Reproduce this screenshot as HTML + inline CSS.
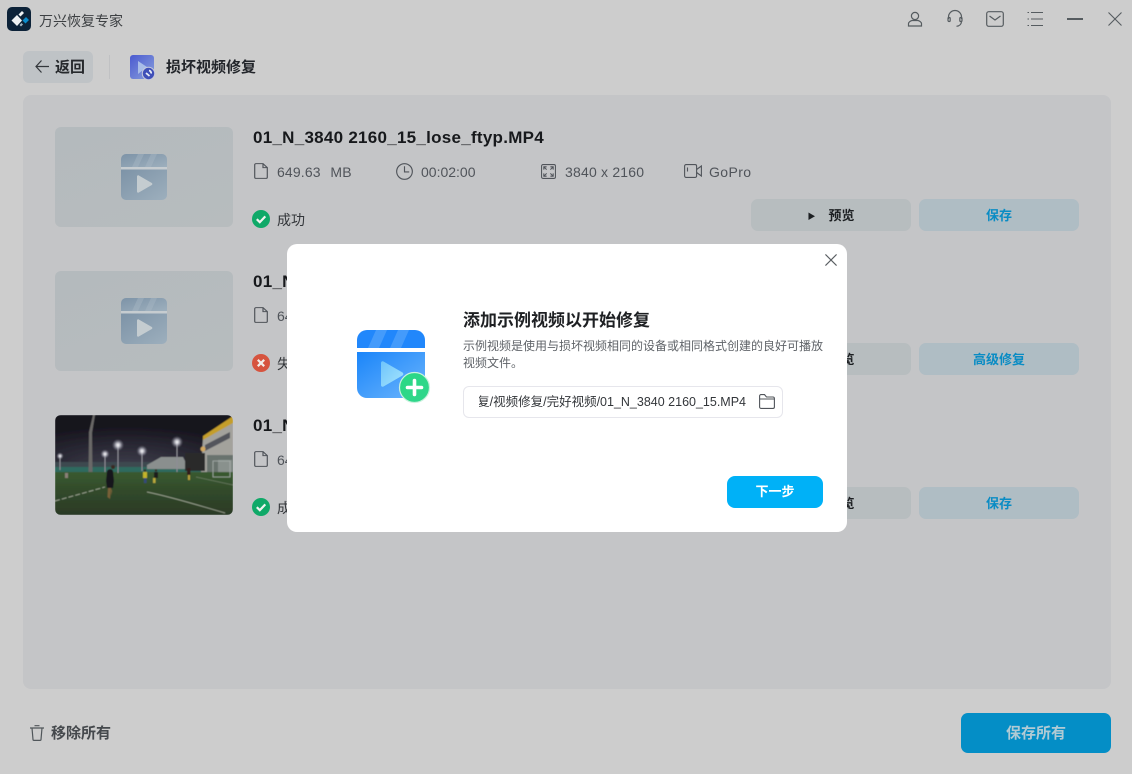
<!DOCTYPE html>
<html lang="zh-CN"><head><meta charset="utf-8"><title>万兴恢复专家</title>
<style>
*{box-sizing:border-box}
html,body{margin:0;padding:0}
body{width:1132px;height:774px;overflow:hidden;position:relative;background:#cdcdcd;font-family:"Liberation Sans","Noto Sans CJK SC",sans-serif;color:#1a1c1e}
.a{position:absolute;white-space:nowrap}
svg{position:absolute;display:block;overflow:visible}
.panel{left:23px;top:95px;width:1088px;height:594px;background:#c4c5c7;border-radius:8px}
.thumb{left:55px;width:178px;height:100px;background:linear-gradient(160deg,#b4babd,#b7bcbe);border-radius:6px}
.name{left:253px;font-size:17px;font-weight:bold;line-height:22px;color:#17191c;letter-spacing:.27px}
.meta{font-size:14px;line-height:20px;color:#50545a}
.btn{width:160px;height:32px;border-radius:7px;text-align:center;font-size:13px;font-weight:bold;line-height:33px}
.g{left:751px;background:#b7bdbf;color:#1c1f22}
.b{left:919px;background:#afbdc4;color:#0a8cc4}
.st{left:277px;font-size:14px;line-height:19px;color:#33363a}
.dlg{left:287px;top:244px;width:560px;height:288px;background:#fff;border-radius:10px}
</style></head><body>

<svg style="left:7px;top:7px" width="24" height="24" viewBox="0 0 24 24">
<rect width="24" height="24" rx="5" fill="#0c2238"/>
<path d="M4.500 13.500L10 8l5 5.500-5 5.500z" fill="#eef1f2"/>
<path d="M11.500 7.500L15 4l2 2-3.500 3.500z" fill="#eef1f2"/>
<path d="M15.500 13.500L19 10l3 3-3.500 3.500z" fill="#0a8ccc"/>
<path d="M12.500 18l2-2 1.500 1.500-2 2z" fill="#9fb2bf"/>
</svg>
<div class="a" style="left:39px;top:11px;font-size:14px;line-height:20px;color:#3d4043">万兴恢复专家</div>

<svg style="left:907px;top:11px" width="16" height="16" viewBox="0 0 16 16" fill="none" stroke="#565c60" stroke-width="1.200">
<circle cx="8" cy="5" r="3.600"/><path d="M1.500 15v-2.500c0-1.200 2-2.700 3.500-3h6c1.500.3 3.500 1.800 3.500 3V15z"/></svg>
<svg style="left:947px;top:10px" width="16" height="18" viewBox="0 0 16 18" fill="none" stroke="#565c60" stroke-width="1.200">
<path d="M1.500 9V7a6.500 6.500 0 0 1 13 0v2M14.500 11c0 3-2 5-5 5.300"/><rect x="1" y="7.500" width="2.200" height="4" rx="1"/><rect x="12.800" y="7.500" width="2.200" height="4" rx="1"/></svg>
<svg style="left:986px;top:11px" width="18" height="16" viewBox="0 0 18 16" fill="none" stroke="#565c60" stroke-width="1.200">
<rect x=".7" y=".7" width="16.600" height="14.600" rx="2"/><path d="M3.500 5l5.500 4 5.500-4"/></svg>
<svg style="left:1027px;top:11px" width="17" height="16" viewBox="0 0 17 16" fill="none" stroke="#565c60" stroke-width="1.100">
<path d="M4 1.500h12M4 8h12M4 14.500h12M.5 1.500h1.500M.5 8h1.500M.5 14.500h1.500"/></svg>
<div class="a" style="left:1067px;top:18px;width:16px;height:1.500px;background:#565c60"></div>
<svg style="left:1108px;top:12px" width="14" height="14" viewBox="0 0 14 14" fill="none" stroke="#565c60" stroke-width="1.100"><path d="M.5.500l13 13M13.500.500l-13 13"/></svg>

<div class="a" style="left:23px;top:51px;width:70px;height:32px;border-radius:6px;background:#bfc3c6"></div>
<svg style="left:35px;top:60px" width="14" height="14" viewBox="0 0 14 14" fill="none" stroke="#33373b" stroke-width="1.200"><path d="M14 6.500H1M6.500 .5L1 6.500l5.500 6"/></svg>
<div class="a" style="left:55px;top:58px;font-size:15px;font-weight:bold;line-height:20px;color:#26292c">返回</div>
<div class="a" style="left:109px;top:55px;width:1px;height:24px;background:#c0c1c3"></div>
<svg style="left:130px;top:55px" width="26" height="26" viewBox="0 0 26 26">
<defs><linearGradient id="v" x1="0" y1="0" x2="1" y2="1"><stop offset="0" stop-color="#4a5ad0"/><stop offset="1" stop-color="#8aa0dc"/></linearGradient></defs>
<rect width="24" height="24" rx="3" fill="url(#v)"/><path d="M8 6l9 6-9 7z" fill="#a9bde8"/>
<circle cx="18.500" cy="18.500" r="6.200" fill="#3f4fb8" stroke="#c8cadc" stroke-width="1"/><path d="M16 18l3.500 3M19 15.500a2.400 2.400 0 0 1 2 3" stroke="#e8ecf6" stroke-width="1.800" fill="none"/></svg>
<div class="a" style="left:166px;top:58px;font-size:15px;font-weight:bold;line-height:20px;color:#22252a">损坏视频修复</div>

<div class="a panel"></div>

<!-- rows -->
<div class="a thumb" style="top:127px"></div>
<div class="a thumb" style="top:271px"></div>
<svg style="left:121px;top:154px" width="46" height="46" viewBox="0 0 46 46"><defs><linearGradient id="c" x1="0" y1="0" x2="1" y2="1"><stop offset="0" stop-color="#7d93a7"/><stop offset="1" stop-color="#9dafbd"/></linearGradient></defs>
<path d="M5 0h36a5 5 0 0 1 5 5v8H0V5a5 5 0 0 1 5-5z" fill="url(#c)"/><rect y="13" width="46" height="2.500" fill="#c6ccd0"/><path d="M0 15.500h46V41a5 5 0 0 1-5 5H5a5 5 0 0 1-5-5z" fill="url(#c)"/>
<path d="M11 13l6-13h6l-6 13zM24 13l6-13h6l-6 13z" fill="#b0bdc8" opacity=".35"/><path d="M16 22.500c0-1 .9-1.500 1.800-1l13 7.500a1.200 1.200 0 0 1 0 2l-13 7.500c-.9.500-1.800 0-1.800-1z" fill="#c4ccd0"/></svg>
<svg style="left:121px;top:298px" width="46" height="46" viewBox="0 0 46 46">
<path d="M5 0h36a5 5 0 0 1 5 5v8H0V5a5 5 0 0 1 5-5z" fill="url(#c)"/><rect y="13" width="46" height="2.500" fill="#c6ccd0"/><path d="M0 15.500h46V41a5 5 0 0 1-5 5H5a5 5 0 0 1-5-5z" fill="url(#c)"/>
<path d="M11 13l6-13h6l-6 13zM24 13l6-13h6l-6 13z" fill="#b0bdc8" opacity=".35"/><path d="M16 22.500c0-1 .9-1.500 1.800-1l13 7.500a1.200 1.200 0 0 1 0 2l-13 7.500c-.9.500-1.800 0-1.800-1z" fill="#c4ccd0"/></svg>

<svg style="left:55px;top:415px" width="178" height="100" viewBox="0 0 178 100">
<defs><clipPath id="p"><rect width="178" height="100" rx="6"/></clipPath>
<filter id="bl"><feGaussianBlur stdDeviation=".45"/></filter>
<radialGradient id="gl"><stop offset="0" stop-color="#fff"/><stop offset=".35" stop-color="#e8e8f0" stop-opacity=".75"/><stop offset="1" stop-color="#8a8aa0" stop-opacity="0"/></radialGradient>
<radialGradient id="haze" cx=".4" cy="1" r=".8"><stop offset="0" stop-color="#4a4a5a"/><stop offset="1" stop-color="#17151e"/></radialGradient>
<linearGradient id="gr" x1="0" y1="0" x2="0" y2="1"><stop offset="0" stop-color="#3a5a30"/><stop offset=".5" stop-color="#30482a"/><stop offset="1" stop-color="#2c3a26"/></linearGradient></defs>
<g clip-path="url(#p)"><g filter="url(#bl)">
<rect width="178" height="60" fill="#15131b"/>
<rect width="178" height="52" fill="url(#haze)" opacity=".8"/>
<rect y="47" width="178" height="8" fill="#3c4a50"/>
<rect y="52" width="178" height="5" fill="#2f6a5e"/>
<path d="M92 50l14-8h22l6 12H92z" fill="#8a8f8e"/>
<path d="M148 22L178 2v55h-32z" fill="#a3a29c"/>
<path d="M148 21L178 1v7l-30 17z" fill="#c49e2c"/>
<path d="M150 30l25-13v6l-25 13z" fill="#52545c"/>
<rect x="130" y="38" width="20" height="18" fill="#2a2c2c"/>
<rect x="152" y="40" width="26" height="18" fill="#69736e"/>
<rect x="163" y="45" width="14" height="12" fill="#aab0ac" opacity=".5"/>
<rect y="57" width="178" height="43" fill="url(#gr)"/>
<path d="M0 86l50-14" stroke="#a9b09e" stroke-width=".8" fill="none" stroke-dasharray="5 2"/>
<path d="M92 77c25 5 50 13 78 21" stroke="#a9b09e" stroke-width=".7" fill="none"/>
<path d="M141 62l37 8" stroke="#7c8a72" stroke-width=".6"/>
<path d="M38 0h2l-3 18 .5 39h-4l.5-40z" fill="#6a6968"/>
<g stroke="#8e8e96" stroke-width="1"><path d="M63 30v28M122 27v30M87 36v20M50 39v18M5 41v14"/></g>
<circle cx="63" cy="30" r="6" fill="url(#gl)"/><circle cx="122" cy="27" r="6" fill="url(#gl)"/><circle cx="87" cy="36" r="5.500" fill="url(#gl)"/><circle cx="50" cy="39" r="4.500" fill="url(#gl)"/><circle cx="5" cy="41" r="3.500" fill="url(#gl)"/><circle cx="148" cy="34" r="2.500" fill="#d2a860"/>
<path d="M52 56c1-2 5-3 6 0l1 10-1 7h-6l-1-7z" fill="#17171a"/><path d="M53 73l-.5 9 2.500 2 1-11zM56 73l1 3-1 5z" fill="#7a6038"/><circle cx="58" cy="52" r="2" fill="#3a2a22"/>
<rect x="88" y="57" width="4" height="6" fill="#c2b42c"/><rect x="89" y="63" width="2.500" height="5" fill="#34487a"/><circle cx="90" cy="55.500" r="1.200" fill="#3a2a22"/>
<rect x="99" y="57" width="4" height="6" fill="#1c1c1c"/><rect x="98" y="63" width="2.500" height="5" fill="#b8a83a"/><circle cx="101" cy="55.500" r="1.200" fill="#3a2a22"/>
<rect x="132" y="53" width="3.500" height="7" fill="#301c1c"/><rect x="133" y="60" width="2" height="5" fill="#b8a03a"/>
<rect x="10" y="58" width="3" height="5" fill="#8a8078"/>
<path d="M158 46h17v16h-17z" fill="none" stroke="#a8b0ac" stroke-width=".8"/>
</g></g></svg>

<div class="a name" style="top:127px">01_N_3840 2160_15_lose_ftyp.MP4</div>
<div class="a name" style="top:271px">01_N_3840 2160_15_lose_ftyp.MP4</div>
<div class="a name" style="top:415px">01_N_3840 2160_15_lose_ftyp.MP4</div>

<svg style="left:254px;top:163px" width="14" height="16" viewBox="0 0 14 18" preserveAspectRatio="none" fill="none" stroke="#50545a" stroke-width="1.200"><path d="M.7 2a1.300 1.300 0 0 1 1.300-1.300h7l4.300 4.500V16a1.300 1.300 0 0 1-1.300 1.300H2A1.300 1.300 0 0 1 .7 16zM9 .7v4.500h4.300"/></svg>
<svg style="left:254px;top:307px" width="14" height="16" viewBox="0 0 14 18" preserveAspectRatio="none" fill="none" stroke="#50545a" stroke-width="1.200"><path d="M.7 2a1.300 1.300 0 0 1 1.300-1.300h7l4.300 4.500V16a1.300 1.300 0 0 1-1.300 1.300H2A1.300 1.300 0 0 1 .7 16zM9 .7v4.500h4.300"/></svg>
<svg style="left:254px;top:451px" width="14" height="16" viewBox="0 0 14 18" preserveAspectRatio="none" fill="none" stroke="#50545a" stroke-width="1.200"><path d="M.7 2a1.300 1.300 0 0 1 1.300-1.300h7l4.300 4.500V16a1.300 1.300 0 0 1-1.300 1.300H2A1.300 1.300 0 0 1 .7 16zM9 .7v4.500h4.300"/></svg>
<div class="a meta" style="left:277px;top:162px;letter-spacing:.15px;word-spacing:.8px">649.63&nbsp; MB</div>
<div class="a meta" style="left:277px;top:306px">649.63&nbsp; MB</div>
<div class="a meta" style="left:277px;top:450px">649.63&nbsp; MB</div>
<svg style="left:396px;top:163px" width="17" height="17" viewBox="0 0 18 18" fill="none" stroke="#50545a" stroke-width="1.200"><circle cx="9" cy="9" r="8.300"/><path d="M9 3.500V9.500h5"/></svg>
<div class="a meta" style="left:421px;top:162px">00:02:00</div>
<svg style="left:541px;top:164px" width="15" height="15" viewBox="0 0 16 16" fill="none" stroke="#50545a" stroke-width="1.100"><rect x=".6" y=".6" width="14.800" height="14.800" rx="1.500"/><path d="M3 6V3h3M3 3l3 3M10 3h3v3M13 3l-3 3M3 10v3h3M3 13l3-3M13 10v3h-3M13 13l-3-3"/></svg>
<div class="a meta" style="left:565px;top:162px;letter-spacing:.2px">3840 x 2160</div>
<svg style="left:684px;top:164px" width="18" height="14" viewBox="0 0 18 14" fill="none" stroke="#50545a" stroke-width="1.100"><rect x=".6" y=".6" width="12" height="12.800" rx="1.500"/><path d="M12.600 5.500l4.800-3.500v10l-4.800-3.500M3.500 3.500v4"/></svg>
<div class="a meta" style="left:709px;top:162px;letter-spacing:.4px">GoPro</div>

<svg style="left:252px;top:210px" width="18" height="18" viewBox="0 0 18 18"><circle cx="9" cy="9" r="9" fill="#0fa968"/><path d="M4.800 9.200l3 3 5.500-5.800" fill="none" stroke="#f0f4f0" stroke-width="2.200"/></svg>
<svg style="left:252px;top:354px" width="18" height="18" viewBox="0 0 18 18"><circle cx="9" cy="9" r="9" fill="#d6543f"/><path d="M5.800 5.800l6.400 6.400M12.200 5.800l-6.400 6.400" fill="none" stroke="#f2eeea" stroke-width="2.200"/></svg>
<svg style="left:252px;top:498px" width="18" height="18" viewBox="0 0 18 18"><circle cx="9" cy="9" r="9" fill="#0fa968"/><path d="M4.800 9.200l3 3 5.500-5.800" fill="none" stroke="#f0f4f0" stroke-width="2.200"/></svg>
<div class="a st" style="top:211px">成功</div>
<div class="a st" style="top:355px">失败</div>
<div class="a st" style="top:499px">成功</div>

<div class="a btn g" style="top:199px"><span style="font-size:8px;margin-right:13px;position:relative;top:-1px">&#9654;</span>预览</div>
<div class="a btn b" style="top:199px">保存</div>
<div class="a btn g" style="top:343px"><span style="font-size:8px;margin-right:13px;position:relative;top:-1px">&#9654;</span>预览</div>
<div class="a btn b" style="top:343px">高级修复</div>
<div class="a btn g" style="top:487px"><span style="font-size:8px;margin-right:13px;position:relative;top:-1px">&#9654;</span>预览</div>
<div class="a btn b" style="top:487px">保存</div>

<svg style="left:30px;top:725px" width="14" height="16" viewBox="0 0 14 16" fill="none" stroke="#50565a" stroke-width="1.200"><path d="M0 3h14M4.500 .7h5M2 3l1 11.500c0 .5.500.9 1 .9h6c.5 0 1-.4 1-.9L12 3"/></svg>
<div class="a" style="left:51px;top:724px;font-size:15px;font-weight:bold;line-height:20px;color:#45494d">移除所有</div>
<div class="a" style="left:961px;top:713px;width:150px;height:40px;border-radius:7px;background:#048ec6;color:#b0cad4;font-size:15px;font-weight:bold;line-height:42px;text-align:center">保存所有</div>

<!-- dialog -->
<div class="a dlg"></div>
<svg style="left:825px;top:254px" width="12" height="12" viewBox="0 0 14 14" fill="none" stroke="#5a5e62" stroke-width="1.300"><path d="M.5.500l13 13M13.500.500l-13 13"/></svg>
<svg style="left:357px;top:330px" width="75" height="75" viewBox="0 0 75 75">
<defs><linearGradient id="d1" x1="0" y1="0" x2="1" y2="1"><stop offset="0" stop-color="#1a85fa"/><stop offset="1" stop-color="#6cb5fc"/></linearGradient>
<linearGradient id="d2" x1="0" y1="0" x2="1" y2="1"><stop offset="0" stop-color="#6fc4fb"/><stop offset="1" stop-color="#a4e4fd"/></linearGradient>
<linearGradient id="d3" x1="0" y1="0" x2="1" y2="1"><stop offset="0" stop-color="#2ad884"/><stop offset="1" stop-color="#30d68c"/></linearGradient></defs>
<path d="M10 0h48a10 10 0 0 1 10 10v8H0v-8A10 10 0 0 1 10 0z" fill="#2187fb"/>
<path d="M0 22h68v36a10 10 0 0 1-10 10H10A10 10 0 0 1 0 58z" fill="url(#d1)"/>
<path d="M11 18l8-18h11l-8 18zM33 18l8-18h11l-8 18z" fill="#7ab8fc" opacity=".4"/>
<path d="M24 33c0-1.500 1.300-2.200 2.500-1.500l19 11c1.100.7 1.100 2.300 0 3l-19 11c-1.200.7-2.500 0-2.500-1.500z" fill="url(#d2)"/>
<circle cx="57.500" cy="57.500" r="15" fill="url(#d3)" stroke="#c9f2de" stroke-width="1.200"/>
<path d="M57.500 50.500v14M50.500 57.500h14" stroke="#fff" stroke-width="3.600" stroke-linecap="round"/></svg>

<div class="a" style="left:463px;top:310px;font-size:17px;font-weight:bold;line-height:22px;color:#1e2023">添加示例视频以开始修复</div>
<div class="a" style="left:463px;top:338px;font-size:12px;line-height:17px;color:#5f6368">示例视频是使用与损坏视频相同的设备或相同格式创建的良好可播放</div>
<div class="a" style="left:463px;top:355px;font-size:12px;line-height:17px;color:#5f6368">视频文件。</div>
<div class="a" style="left:463px;top:386px;width:320px;height:32px;border:1px solid #e6e6ec;border-radius:6px;background:#fff"></div>
<div class="a" style="left:479px;top:393px;width:267px;overflow:hidden;text-align:right;direction:rtl;font-size:12.500px;line-height:18px;color:#33363a"><span style="direction:ltr;unicode-bidi:bidi-override">修复/视频修复/完好视频/01_N_3840 2160_15.MP4</span></div>
<svg style="left:759px;top:394px" width="16" height="15" viewBox="0 0 16 15" fill="none" stroke="#50545a" stroke-width="1.100"><path d="M.6 2A1.400 1.400 0 0 1 2 .6h3.500l2 2.400H14a1.400 1.400 0 0 1 1.400 1.400v8.600a1.400 1.400 0 0 1-1.400 1.400H2a1.400 1.400 0 0 1-1.400-1.400zM.6 5h14.800"/></svg>
<div class="a" style="left:727px;top:476px;width:96px;height:32px;border-radius:8px;background:#00b1f7;color:#fff;font-size:13px;font-weight:bold;line-height:32px;text-align:center">下一步</div>
</body></html>
